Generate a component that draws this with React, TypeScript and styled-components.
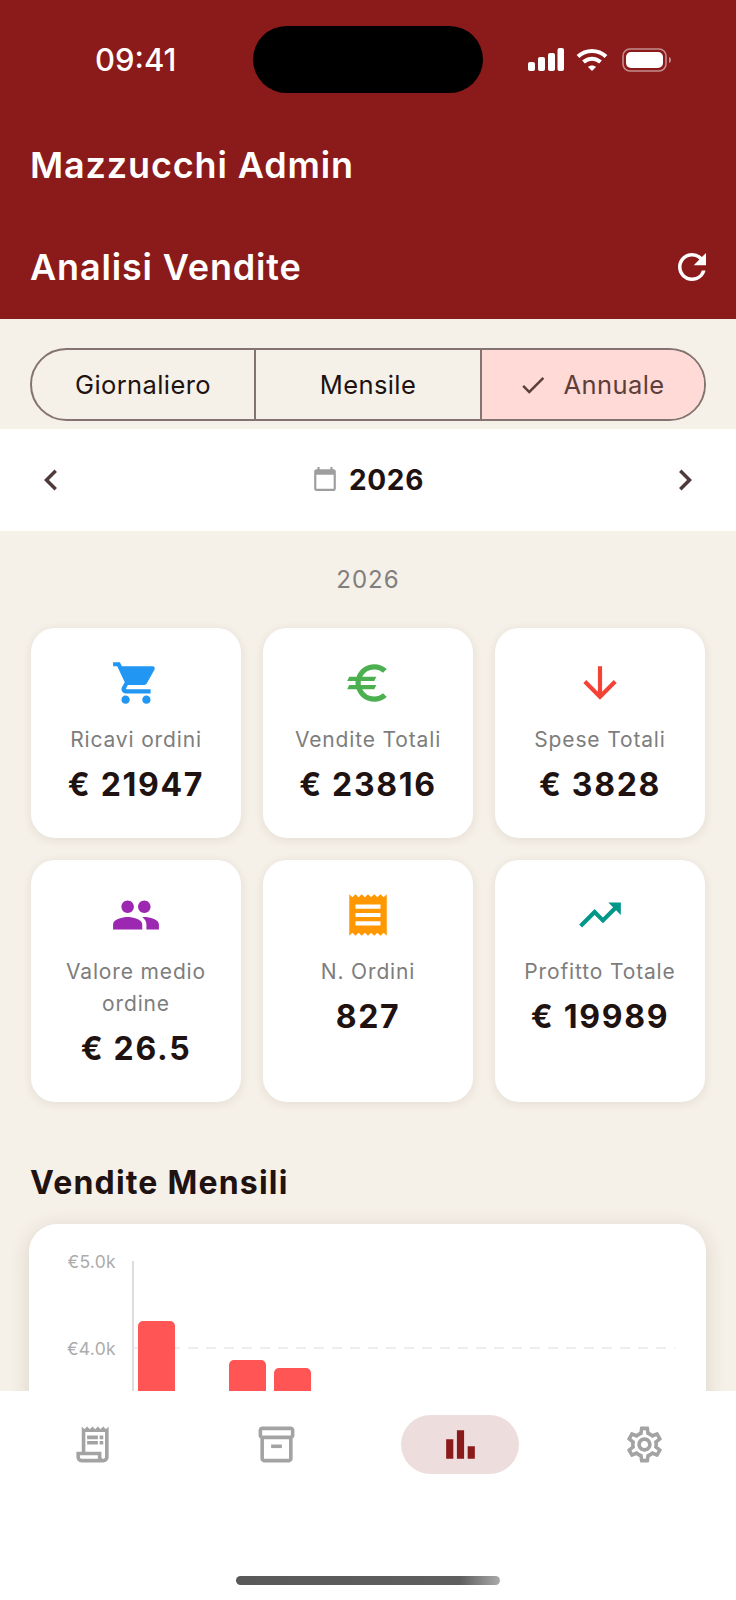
import styled, { createGlobalStyle } from "styled-components";
import {
  MdArrowDownward,
  MdBarChart,
  MdCalendarToday,
  MdCheck,
  MdChevronLeft,
  MdChevronRight,
  MdEuro,
  MdOutlineInventory2,
  MdOutlineReceiptLong,
  MdOutlineSettings,
  MdPeople,
  MdReceipt,
  MdRefresh,
  MdShoppingCart,
  MdTrendingUp,
} from "react-icons/md";
import type { IconType } from "react-icons";

const GlobalStyle = createGlobalStyle`
  html, body {
    margin: 0;
    padding: 0;
    background: #f5f0e8;
    font-family: "Inter", "Liberation Sans", sans-serif;
  }
`;

const Screen = styled.div`
  width: 736px;
  height: 1600px;
  display: flex;
  flex-direction: column;
  overflow: hidden;
  background: #f5f0e8;
`;

const Header = styled.header`
  height: 319px;
  flex-shrink: 0;
  background: #8b1a1a;
  color: #fff;
  display: flex;
  flex-direction: column;
`;

const StatusBar = styled.div`
  height: 118px;
  padding-top: 26px;
  box-sizing: border-box;
  display: grid;
  grid-template-columns: 253px 230px 253px;
`;

const Clock = styled.div`
  height: 67px;
  display: flex;
  align-items: center;
  padding-left: 95px;
  font-size: 31px;
  font-weight: 500;
`;

const Island = styled.div`
  height: 67px;
  background: #000;
  border-radius: 34px;
`;

const StatusIcons = styled.div`
  height: 67px;
  display: flex;
  align-items: center;
  padding-left: 275px;
  margin-left: -230px;
  gap: 12px;
  svg:last-child {
    margin-left: 2px;
  }
`;

const TitleRow = styled.div<{ $height: number; $top?: number }>`
  height: ${(p) => p.$height}px;
  padding: ${(p) => p.$top ?? 0}px 30px 0;
  box-sizing: border-box;
  display: flex;
  align-items: center;
  justify-content: space-between;
`;

const Title = styled.h1`
  margin: 0;
  font-size: 36px;
  font-weight: 600;
  letter-spacing: 0.85px;
`;

const RefreshButton = styled.div`
  display: flex;
  font-size: 42px;
  margin-right: -7px;
`;

const Content = styled.main`
  flex: 1;
  min-height: 0;
  overflow: hidden;
  display: flex;
  flex-direction: column;
`;

const Segments = styled.div`
  margin: 29px 30px 8px;
  height: 73px;
  flex-shrink: 0;
  box-sizing: border-box;
  border: 2px solid #857371;
  border-radius: 37px;
  overflow: hidden;
  display: grid;
  grid-template-columns: 222px 226px 1fr;
`;

const Segment = styled.div<{ $active?: boolean }>`
  display: flex;
  align-items: center;
  justify-content: center;
  gap: 16px;
  padding-right: ${(p) => (p.$active ? 4 : 0)}px;
  font-size: 25.5px;
  font-weight: 400;
  letter-spacing: 0.4px;
  color: ${(p) => (p.$active ? "#5c3f3c" : "#201210")};
  background: ${(p) => (p.$active ? "#ffdad6" : "transparent")};
  & + & {
    border-left: 2px solid #857371;
  }
`;

const PeriodBar = styled.div`
  height: 102px;
  flex-shrink: 0;
  background: #fff;
  padding: 0 30px;
  display: flex;
  align-items: center;
  justify-content: space-between;
  color: #4e3a38;
  font-size: 42px;
`;

const PeriodLabel = styled.div`
  display: flex;
  align-items: center;
  gap: 11px;
  font-size: 28px;
  font-weight: 700;
  letter-spacing: 0.7px;
  color: #201210;
  svg {
    color: #9e9e9e;
    font-size: 26px;
    margin-top: -3px;
  }
`;

const Caption = styled.div`
  margin-top: 32px;
  height: 34px;
  line-height: 34px;
  text-align: center;
  font-size: 24px;
  letter-spacing: 1px;
  color: #7f7f7f;
`;

const StatsGrid = styled.div`
  margin: 31px 31px 0;
  display: grid;
  grid-template-columns: repeat(3, 210px);
  grid-template-rows: 210px 242px;
  gap: 22px;
`;

const StatCard = styled.div`
  background: #fff;
  border-radius: 24px;
  box-shadow: 0 2px 10px rgba(90, 70, 40, 0.1);
  padding: 30px 10px 0;
  display: flex;
  flex-direction: column;
  align-items: center;
  text-align: center;
`;

const StatIcon = styled.div<{ $color: string }>`
  display: flex;
  font-size: 50px;
  color: ${(p) => p.$color};
`;

const StatLabel = styled.div`
  margin-top: 16px;
  font-size: 21px;
  line-height: 32px;
  letter-spacing: 0.85px;
  color: #7d7d7d;
`;

const StatValue = styled.div`
  margin-top: 9px;
  font-size: 32px;
  line-height: 39px;
  font-weight: 700;
  letter-spacing: 1.7px;
  color: #201210;
`;

const SectionTitle = styled.h2`
  margin: 59px 30px 0;
  font-size: 32px;
  line-height: 44px;
  font-weight: 700;
  letter-spacing: 1.2px;
  color: #201210;
`;

const ChartCard = styled.div`
  margin: 19px 30px 0 29px;
  height: 420px;
  flex-shrink: 0;
  background: #fff;
  border-radius: 28px;
  box-shadow: 0 4px 20px rgba(90, 70, 40, 0.16);
`;

const BottomNav = styled.nav`
  height: 209px;
  flex-shrink: 0;
  background: #fff;
  display: flex;
  flex-direction: column;
  position: relative;
`;

const NavItems = styled.div`
  display: grid;
  grid-template-columns: repeat(4, 184px);
  padding-top: 24px;
`;

const NavItem = styled.div<{ $active?: boolean }>`
  display: flex;
  justify-content: center;
  span {
    width: 118px;
    height: 59px;
    border-radius: 30px;
    display: flex;
    align-items: center;
    justify-content: center;
    font-size: 43px;
    color: ${(p) => (p.$active ? "#8b1a1a" : "#a3a3a3")};
    background: ${(p) => (p.$active ? "#eedddd" : "transparent")};
  }
`;

const HomeIndicator = styled.div`
  width: 264px;
  height: 9px;
  margin: 102px auto 0;
  border-radius: 5px;
  background: linear-gradient(90deg, #595959 0%, #5e5e5e 85%, #aaaaaa 100%);
`;

type Stat = { icon: IconType; color: string; label: string; value: string };

const stats: Stat[] = [
  { icon: MdShoppingCart, color: "#2196f3", label: "Ricavi ordini", value: "€ 21947" },
  { icon: MdEuro, color: "#4caf50", label: "Vendite Totali", value: "€ 23816" },
  { icon: MdArrowDownward, color: "#f44336", label: "Spese Totali", value: "€ 3828" },
  { icon: MdPeople, color: "#9c27b0", label: "Valore medio ordine", value: "€ 26.5" },
  { icon: MdReceipt, color: "#ff9800", label: "N. Ordini", value: "827" },
  { icon: MdTrendingUp, color: "#009688", label: "Profitto Totale", value: "€ 19989" },
];

const navIcons: IconType[] = [MdOutlineReceiptLong, MdOutlineInventory2, MdBarChart, MdOutlineSettings];

const SignalIcon = () => (
  <svg width="36" height="24" viewBox="0 0 36 24" fill="#fff">
    <rect x="0" y="14" width="7" height="9" rx="2" />
    <rect x="10" y="9" width="7" height="14" rx="2" />
    <rect x="20" y="5" width="7" height="18" rx="2" />
    <rect x="29.5" y="0" width="6.5" height="23" rx="2" />
  </svg>
);

const WifiIcon = () => (
  <svg width="32" height="24" viewBox="0 0 32 24" fill="none" stroke="#fff" strokeWidth="4">
    <path d="M2 8.5C10 1 22 1 30 8.5" />
    <path d="M7.5 14C12.5 9.5 19.5 9.5 24.5 14" />
    <path d="M12 19L16 23L20 19C18 17 14 17 12 19Z" fill="#fff" stroke="none" />
  </svg>
);

const BatteryIcon = () => (
  <svg width="50" height="24" viewBox="0 0 50 24" fill="none">
    <rect x="1" y="1" width="43" height="22" rx="7" stroke="#fff" strokeOpacity="0.5" strokeWidth="1.6" />
    <rect x="4" y="4" width="37" height="16" rx="5" fill="#fff" />
    <path d="M47 9C48.5 9.5 49 10.5 49 12C49 13.5 48.5 14.5 47 15Z" fill="#fff" fillOpacity="0.5" />
  </svg>
);

const MonthlyChart = () => (
  <svg width="677" height="420" viewBox="0 0 677 420">
    <g fontFamily="Inter, sans-serif" fontSize="17.5" fill="#ababab" letterSpacing="0.3">
      <text x="87" y="44" textAnchor="end">€5.0k</text>
      <text x="87" y="131" textAnchor="end">€4.0k</text>
    </g>
    <line x1="104" y1="37" x2="104" y2="420" stroke="#dddddd" strokeWidth="2" />
    <line x1="105" y1="124" x2="646" y2="124" stroke="#eeeeee" strokeWidth="2" strokeDasharray="10 8" />
    <path d="M109 420V102a5 5 0 0 1 5-5h27a5 5 0 0 1 5 5V420Z" fill="#ff5555" />
    <path d="M200 420V141a5 5 0 0 1 5-5h27a5 5 0 0 1 5 5V420Z" fill="#ff5555" />
    <path d="M245 420V149a5 5 0 0 1 5-5h27a5 5 0 0 1 5 5V420Z" fill="#ff5555" />
  </svg>
);

export default function App() {
  return (
    <>
      <GlobalStyle />
      <Screen>
        <Header>
          <StatusBar>
            <Clock>09:41</Clock>
            <Island />
            <StatusIcons>
              <SignalIcon />
              <WifiIcon />
              <BatteryIcon />
            </StatusIcons>
          </StatusBar>
          <TitleRow $height={94}>
            <Title>Mazzucchi Admin</Title>
          </TitleRow>
          <TitleRow $height={107} $top={3}>
            <Title>Analisi Vendite</Title>
            <RefreshButton>
              <MdRefresh />
            </RefreshButton>
          </TitleRow>
        </Header>

        <Content>
          <Segments>
            <Segment>Giornaliero</Segment>
            <Segment>Mensile</Segment>
            <Segment $active>
              <MdCheck size={30} />
              Annuale
            </Segment>
          </Segments>

          <PeriodBar>
            <MdChevronLeft />
            <PeriodLabel>
              <MdCalendarToday />
              2026
            </PeriodLabel>
            <MdChevronRight />
          </PeriodBar>

          <Caption>2026</Caption>

          <StatsGrid>
            {stats.map((stat) => (
              <StatCard key={stat.label}>
                <StatIcon $color={stat.color}>
                  <stat.icon />
                </StatIcon>
                <StatLabel>{stat.label}</StatLabel>
                <StatValue>{stat.value}</StatValue>
              </StatCard>
            ))}
          </StatsGrid>

          <SectionTitle>Vendite Mensili</SectionTitle>
          <ChartCard>
            <MonthlyChart />
          </ChartCard>
        </Content>

        <BottomNav>
          <NavItems>
            {navIcons.map((Icon, i) => (
              <NavItem key={i} $active={i === 2}>
                <span>
                  <Icon />
                </span>
              </NavItem>
            ))}
          </NavItems>
          <HomeIndicator />
        </BottomNav>
      </Screen>
    </>
  );
}
